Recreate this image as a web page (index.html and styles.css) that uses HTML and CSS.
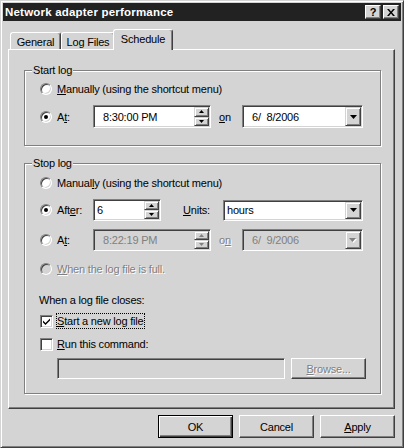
FILE: index.html
```html
<!DOCTYPE html>
<html>
<head>
<meta charset="utf-8">
<title>Network adapter performance</title>
<link rel="stylesheet" href="styles.css">
</head>
<body>
<div class="window">
  <div class="titlebar">
    <span class="title">Network adapter performance</span>
    <div class="tbtns">
      <div class="tbtn help">?</div>
      <div class="tbtn close">
        <svg width="8" height="7" viewBox="0 0 8 7"><path d="M0 0h2l2 2.4L6 0h2L5 3.5 8 7H6L4 4.6 2 7H0l3-3.5z"/></svg>
      </div>
    </div>
  </div>
  <div class="client">
    <div class="tabs">
      <div class="tab t-general">General</div>
      <div class="tab t-log">Log Files</div>
      <div class="tab t-sched sel">Schedule</div>
    </div>
    <div class="panel">
      <fieldset class="group g-start">
        <legend>Start log</legend>
        <div class="gbody gb-start">
          <div class="row r-line">
            <span class="radio"></span><span class="lbl"><u>M</u>anually (using the shortcut menu)</span>
          </div>
          <div class="row r-ctl r-start-at">
            <span class="radio on"></span><span class="lbl key">A<u>t</u>:</span>
            <div class="field time">
              <span class="val pad">8:30:00 PM</span>
              <div class="spin">
                <div class="sb"><svg width="5" height="3" viewBox="0 0 5 3"><path d="M2.5 0L5 3H0z"/></svg></div>
                <div class="sb"><svg width="5" height="3" viewBox="0 0 5 3"><path d="M0 0h5L2.5 3z"/></svg></div>
              </div>
            </div>
            <span class="on-lbl"><u>o</u>n</span>
            <div class="field combo date">
              <span class="val pad">6/  8/2006</span>
              <div class="drop"><svg width="7" height="4" viewBox="0 0 7 4"><path d="M0 0h7L3.5 4z"/></svg></div>
            </div>
          </div>
        </div>
      </fieldset>

      <fieldset class="group g-stop">
        <legend>Stop log</legend>
        <div class="gbody gb-stop">
          <div class="row r-line">
            <span class="radio"></span><span class="lbl">Manual<u>l</u>y (using the shortcut menu)</span>
          </div>
          <div class="row r-ctl r-after">
            <span class="radio on"></span><span class="lbl key">Aft<u>e</u>r:</span>
            <div class="field after">
              <span class="val">6</span>
              <div class="spin">
                <div class="sb"><svg width="5" height="3" viewBox="0 0 5 3"><path d="M2.5 0L5 3H0z"/></svg></div>
                <div class="sb"><svg width="5" height="3" viewBox="0 0 5 3"><path d="M0 0h5L2.5 3z"/></svg></div>
              </div>
            </div>
            <span class="units-lbl"><u>U</u>nits:</span>
            <div class="field combo units">
              <span class="val">hours</span>
              <div class="drop"><svg width="7" height="4" viewBox="0 0 7 4"><path d="M0 0h7L3.5 4z"/></svg></div>
            </div>
          </div>
          <div class="row r-ctl r-stop-at">
            <span class="radio"></span><span class="lbl key">A<u>t</u>:</span>
            <div class="field time dis">
              <span class="val pad">8:22:19 PM</span>
              <div class="spin dis">
                <div class="sb"><svg width="5" height="3" viewBox="0 0 5 3"><path d="M2.5 0L5 3H0z"/></svg></div>
                <div class="sb"><svg width="5" height="3" viewBox="0 0 5 3"><path d="M0 0h5L2.5 3z"/></svg></div>
              </div>
            </div>
            <span class="on-lbl distext">o<u>n</u></span>
            <div class="field combo date dis">
              <span class="val pad">6/  9/2006</span>
              <div class="drop dis"><svg width="8" height="5" viewBox="0 0 8 5"><path d="M1 1h7L4.5 5z" fill="#fff"/><path d="M0 0h7L3.5 4z"/></svg></div>
            </div>
          </div>
          <div class="row r-line r-full">
            <span class="radio dis"></span><span class="lbl distext"><u>W</u>hen the log file is full.</span>
          </div>
          <div class="row r-line r-closes">
            <span class="lbl">When a log file closes:</span>
          </div>
          <div class="row r-line r-check1">
            <span class="check">
              <svg width="7" height="7" viewBox="0 0 7 7"><path d="M0 2.5l2.5 2.5L7 0.5v2L2.5 7 0 4.5z"/></svg>
            </span>
            <span class="clbl focus"><u>S</u>tart a new log file</span>
          </div>
          <div class="row r-line r-check2">
            <span class="check"></span>
            <span class="clbl"><u>R</u>un this command:</span>
          </div>
          <div class="row r-cmd">
            <div class="field cmd dis"></div>
            <div class="btn browse distext"><span><u>B</u>rowse...</span></div>
          </div>
        </div>
      </fieldset>
    </div>
    <div class="buttons">
      <div class="btn dlg default">OK</div>
      <div class="btn dlg">Cancel</div>
      <div class="btn dlg"><span><u>A</u>pply</span></div>
    </div>
  </div>
</div>
</body>
</html>
```

FILE: styles.css
```css
* { box-sizing: border-box; }
html, body { margin: 0; padding: 0; }
body {
  width: 404px;
  height: 448px;
  overflow: hidden;
  background: #d4d4d4;
  font-family: "Liberation Sans", Arial, sans-serif;
  font-size: 11px;
  color: #000;
}
u { text-decoration: underline; text-underline-offset: 1px; }

.window {
  width: 404px;
  height: 448px;
  background: #d4d4d4;
  border: 1px solid;
  border-color: #d4d4d4 #404040 #404040 #d4d4d4;
  box-shadow: inset 1px 1px #fff, inset -1px -1px #808080;
  padding: 2px;
  display: flex;
  flex-direction: column;
}

.titlebar {
  height: 18px;
  background: #222;
  color: #fff;
  display: flex;
  align-items: center;
  justify-content: space-between;
  padding: 0 2px;
  flex: none;
}
.title { font-weight: bold; font-size: 11.5px; letter-spacing: 0.2px; }
.tbtns { display: flex; gap: 2px; }
.tbtn {
  width: 16px;
  height: 14px;
  background: #d4d4d4;
  border: 1px solid;
  border-color: #fff #404040 #404040 #fff;
  box-shadow: inset -1px -1px #808080;
  display: flex;
  align-items: center;
  justify-content: center;
  color: #000;
  font-weight: bold;
  font-size: 11px;
  line-height: 1;
}
.tbtn svg { display: block; }

.client {
  flex: 1;
  padding: 8px 6px 0 5px;
  display: flex;
  flex-direction: column;
  letter-spacing: -0.2px;
}

.tabs {
  height: 20px;
  display: flex;
  align-items: flex-end;
  padding-left: 2px;
  flex: none;
}
.tab {
  height: 17px;
  background: #d4d4d4;
  border-top: 1px solid #fff;
  border-left: 1px solid #fff;
  border-right: 1px solid #404040;
  box-shadow: inset -1px 0 #808080;
  border-radius: 3px 3px 0 0;
  display: flex;
  align-items: center;
  justify-content: center;
  padding-top: 1px;
}
.t-general { width: 51px; }
.t-log { width: 54px; }
.t-sched { width: 56px; }
.tab.sel {
  height: 21px;
  width: 60px;
  margin: 0 -2px -1px -2px;
  position: relative;
  z-index: 1;
  padding-top: 0;
  padding-bottom: 3px;
}

.panel {
  width: 387px;
  height: 360px;
  flex: none;
  border: 1px solid;
  border-color: #fff #404040 #404040 #fff;
  box-shadow: inset -1px -1px #808080;
  padding: 13px 0 0 15px;
}

.group {
  margin: 0;
  padding: 0;
  width: 357px;
  border: 1px solid #808080;
  box-shadow: inset 1px 1px #fff, 1px 1px #fff;
  min-width: 0;
}
.group legend {
  margin-left: 7px;
  padding: 0 1px;
  line-height: 14px;
  font-size: 11px;
  background: #d4d4d4;
}
.g-stop { margin-top: 10px; }

.gbody { padding-left: 15px; display: flex; flex-direction: column; }
.gb-start { padding-top: 4px; padding-bottom: 17px; }
.gb-stop { padding-top: 5px; padding-bottom: 14px; }

.row { display: flex; align-items: center; }
.r-line { height: 16px; }
.r-ctl { margin-top: 8px; }
.r-start-at { height: 23px; }
.r-after { height: 22px; }
.r-stop-at { height: 22px; }
.r-full { margin-top: 10px; }
.r-closes { margin-top: 15px; margin-left: -1px; }
.r-check1 { margin-top: 5px; }
.r-check2 { margin-top: 7px; }
.r-cmd { margin-top: 6px; height: 21px; padding-left: 17px; gap: 6px; }

.radio {
  flex: none;
  width: 12px;
  height: 12px;
  border-radius: 50%;
  background: #fff;
  border: 1px solid;
  border-color: #808080 #fff #fff #808080;
  box-shadow: inset 1px 1px #404040, inset -1px -1px #d4d4d4;
  display: flex;
  align-items: center;
  justify-content: center;
  margin-right: 5px;
}
.radio.on::before {
  content: "";
  width: 4px;
  height: 4px;
  border-radius: 50%;
  background: #000;
}
.radio.dis { background: #d4d4d4; }

.lbl { white-space: nowrap; }
.lbl.key { width: 36px; flex: none; }

.distext { color: #808080; text-shadow: 1px 1px 0 #fff; }

.field {
  flex: none;
  display: flex;
  align-items: stretch;
  background: #fff;
  border: 1px solid;
  border-color: #808080 #fff #fff #808080;
  box-shadow: inset 1px 1px #404040, inset -1px -1px #d4d4d4;
  padding: 1px;
  height: 100%;
}
.field.dis { background: #d4d4d4; color: #808080; }
.val {
  flex: 1;
  display: flex;
  align-items: center;
  white-space: pre;
  padding-left: 2px;
}
.val.pad { padding-left: 8px; }

.time { width: 118px; }
.date { width: 121px; }
.after { width: 68px; height: 22px; }
.units { width: 140px; height: 21px; }
.cmd { width: 228px; height: 21px; }

.on-lbl { width: 23px; margin-left: 8px; flex: none; }
.units-lbl { width: 40px; margin-left: 22px; flex: none; }

.spin {
  width: 15px;
  flex: none;
  display: flex;
  flex-direction: column;
}
.sb, .drop {
  background: #d4d4d4;
  border: 1px solid;
  border-color: #d4d4d4 #404040 #404040 #d4d4d4;
  box-shadow: inset 1px 1px #fff, inset -1px -1px #808080;
  display: flex;
  align-items: center;
  justify-content: center;
}
.sb { flex: 1; }
.sb svg, .drop svg { display: block; }
.spin.dis svg path { fill: #808080; }
.drop { width: 16px; flex: none; }
.drop.dis svg path:last-child { fill: #808080; }

.check {
  flex: none;
  width: 13px;
  height: 13px;
  background: #fff;
  border: 1px solid;
  border-color: #808080 #fff #fff #808080;
  box-shadow: inset 1px 1px #404040, inset -1px -1px #d4d4d4;
  display: flex;
  align-items: center;
  justify-content: center;
  margin-right: 3px;
}
.check svg { display: block; }
.clbl {
  border: 1px solid transparent;
  line-height: 14px;
  padding: 0;
  white-space: nowrap;
}
.clbl.focus { border: 1px dotted #000; }

.btn {
  background: #d4d4d4;
  border: 1px solid;
  border-color: #fff #404040 #404040 #fff;
  box-shadow: inset -1px -1px #808080;
  display: flex;
  align-items: center;
  justify-content: center;
  flex: none;
}
.browse { width: 75px; height: 21px; }

.buttons {
  margin-top: 6px;
  display: flex;
  justify-content: flex-end;
  gap: 6px;
}
.dlg { width: 75px; height: 23px; }
.dlg.default {
  border: 1px solid #000;
  box-shadow: inset 1px 1px #fff, inset -1px -1px #404040, inset -2px -2px #808080;
}
```
